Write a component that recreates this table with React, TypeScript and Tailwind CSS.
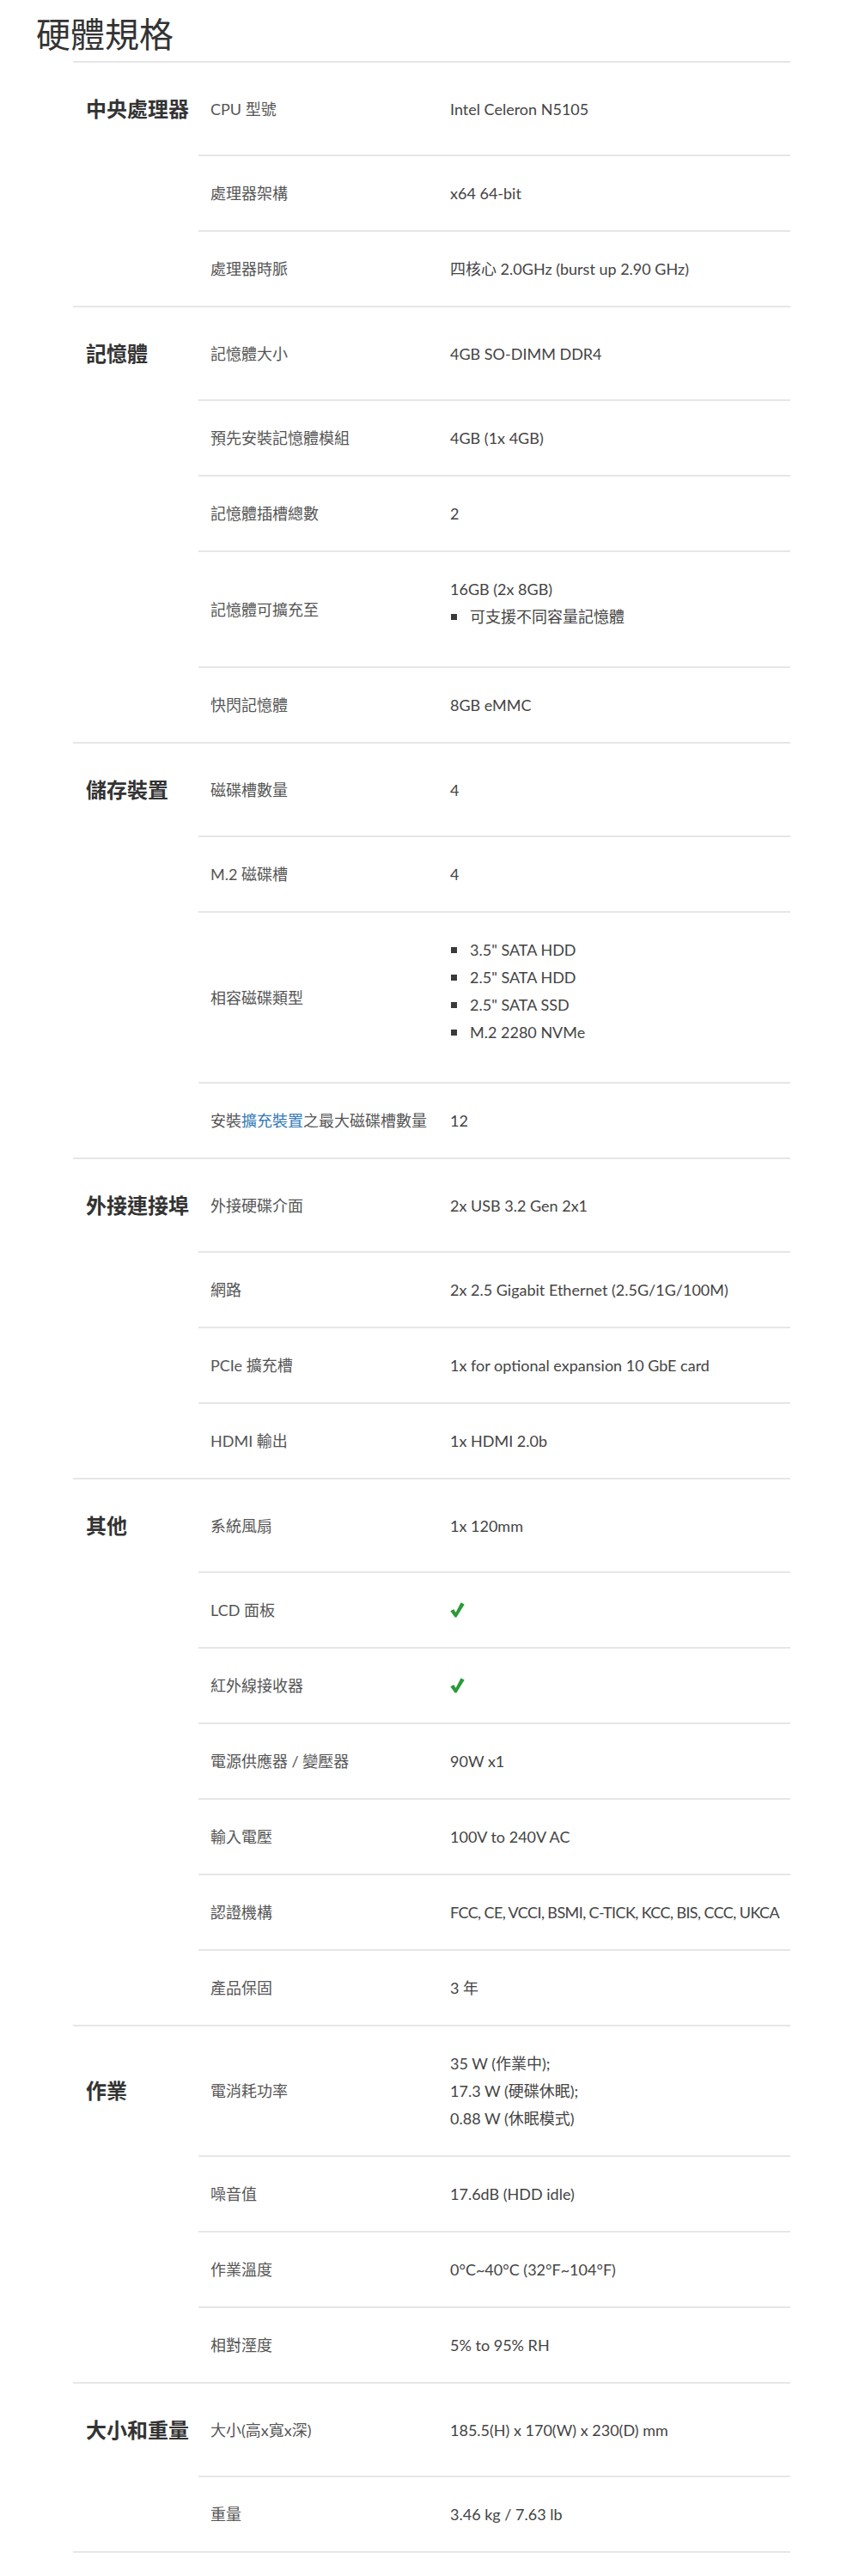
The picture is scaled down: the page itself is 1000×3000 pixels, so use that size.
import React from "react";

type Row = { k: React.ReactNode; v: React.ReactNode; tight?: boolean };
type Group = { label: string; rows: Row[] };

const Check = () => (
  <svg width="17" height="18" viewBox="0 0 17 18" className="block">
    <path d="M0.3 10.2 L4.2 7.9 L6.6 11.8 L12.6 0.3 L16.7 2.4 L7.4 17.6 L5.6 17.6 Z" fill="#2a9a3a" />
  </svg>
);

const Bullets = ({ items }: { items: string[] }) => (
  <ul className="mb-[15px]">
    {items.map((t) => (
      <li key={t} className="flex items-center">
        <span className="ml-[1px] mr-[15px] inline-block h-[7px] w-[7px] shrink-0 bg-[#3a3a3a]" />
        <span>{t}</span>
      </li>
    ))}
  </ul>
);

const groups: Group[] = [
  {
    label: "中央處理器",
    rows: [
      { k: "CPU 型號", v: "Intel Celeron N5105" },
      { k: "處理器架構", v: "x64 64-bit" },
      { k: "處理器時脈", v: "四核心 2.0GHz (burst up 2.90 GHz)" },
    ],
  },
  {
    label: "記憶體",
    rows: [
      { k: "記憶體大小", v: "4GB SO-DIMM DDR4" },
      { k: "預先安裝記憶體模組", v: "4GB (1x 4GB)" },
      { k: "記憶體插槽總數", v: "2" },
      {
        k: "記憶體可擴充至",
        v: (
          <>
            <div>16GB (2x 8GB)</div>
            <Bullets items={["可支援不同容量記憶體"]} />
          </>
        ),
      },
      { k: "快閃記憶體", v: "8GB eMMC" },
    ],
  },
  {
    label: "儲存裝置",
    rows: [
      { k: "磁碟槽數量", v: "4" },
      { k: "M.2 磁碟槽", v: "4" },
      {
        k: "相容磁碟類型",
        v: <Bullets items={['3.5" SATA HDD', '2.5" SATA HDD', '2.5" SATA SSD', "M.2 2280 NVMe"]} />,
      },
      {
        k: (
          <span>
            安裝<span className="text-[#337ab7]">擴充裝置</span>之最大磁碟槽數量
          </span>
        ),
        v: "12",
      },
    ],
  },
  {
    label: "外接連接埠",
    rows: [
      { k: "外接硬碟介面", v: "2x USB 3.2 Gen 2x1" },
      { k: "網路", v: "2x 2.5 Gigabit Ethernet (2.5G/1G/100M)" },
      { k: "PCIe 擴充槽", v: "1x for optional expansion 10 GbE card" },
      { k: "HDMI 輸出", v: "1x HDMI 2.0b" },
    ],
  },
  {
    label: "其他",
    rows: [
      { k: "系統風扇", v: "1x 120mm" },
      { k: "LCD 面板", v: <Check /> },
      { k: "紅外線接收器", v: <Check /> },
      { k: "電源供應器 / 變壓器", v: "90W x1" },
      { k: "輸入電壓", v: "100V to 240V AC" },
      { k: "認證機構", v: "FCC, CE, VCCI, BSMI, C-TICK, KCC, BIS, CCC, UKCA", tight: true },
      { k: "產品保固", v: "3 年" },
    ],
  },
  {
    label: "作業",
    rows: [
      {
        k: "電消耗功率",
        v: (
          <>
            <div>35 W (作業中);</div>
            <div>17.3 W (硬碟休眠);</div>
            <div>0.88 W (休眠模式)</div>
          </>
        ),
      },
      { k: "噪音值", v: "17.6dB (HDD idle)" },
      { k: "作業溫度", v: "0°C~40°C (32°F~104°F)" },
      { k: "相對溼度", v: "5% to 95% RH" },
    ],
  },
  {
    label: "大小和重量",
    rows: [
      { k: "大小(高x寬x深)", v: "185.5(H) x 170(W) x 230(D) mm" },
      { k: "重量", v: "3.46 kg / 7.63 lb" },
    ],
  },
];

export default function App() {
  return (
    <div
      className="w-[1000px] min-h-[3000px] bg-white"
      style={{ fontFamily: 'Lato, "Noto Sans CJK TC", sans-serif' }}
    >
      <div className="pl-[42px] pt-[16px]">
        <h1 className="text-[40px] leading-[48px] font-normal text-[#333333]">硬體規格</h1>
      </div>
      <div className="ml-[85px] mt-[7px] w-[835px] text-[18px] leading-[32px]">
        {groups.map((g) => (
          <div key={g.label}>
            {g.rows.map((r, i) => (
              <div
                key={i}
                className={i === 0 ? "flex min-h-[109px] border-t-2 border-[#e6e6e6]" : "flex min-h-[88px]"}
              >
                <div className="flex w-[146px] shrink-0 items-center pl-[15px] text-[24px] font-bold text-[#333333]">
                  {i === 0 ? g.label : null}
                </div>
                <div className={i === 0 ? "flex min-w-0 flex-1" : "flex min-w-0 flex-1 border-t-2 border-[#e6e6e6]"}>
                  <div className="flex w-[279px] shrink-0 items-center pl-[14px] text-[#555555]">{r.k}</div>
                  <div
                    className={
                      r.tight
                        ? "flex min-w-0 flex-1 flex-col justify-center whitespace-nowrap py-[27px] pl-[14px] tracking-[-0.6px] text-[#444444]"
                        : "flex min-w-0 flex-1 flex-col justify-center whitespace-nowrap py-[27px] pl-[14px] text-[#444444]"
                    }
                  >
                    {r.v}
                  </div>
                </div>
              </div>
            ))}
          </div>
        ))}
        <div className="border-t-2 border-[#e6e6e6]" />
      </div>
    </div>
  );
}
